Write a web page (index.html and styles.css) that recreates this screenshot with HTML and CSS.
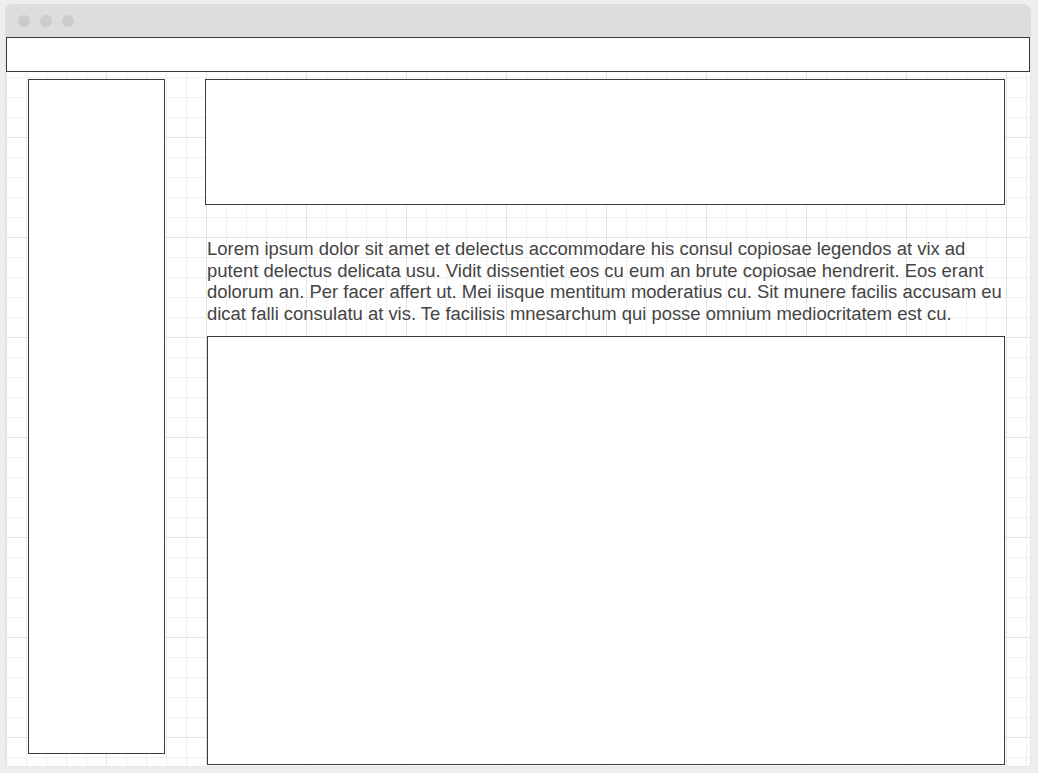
FILE: index.html
```html
<!DOCTYPE html>
<html lang="en">
<head>
<meta charset="utf-8">
<title>Wireframe</title>
<link rel="stylesheet" href="styles.css">
</head>
<body>
<div class="window">
  <div class="titlebar">
    <span class="dot"></span><span class="dot"></span><span class="dot"></span>
  </div>
  <div class="canvas">
    <div class="header box"></div>
    <div class="layout">
      <aside class="sidebar box"></aside>
      <main class="main">
        <div class="hero box"></div>
        <p class="copy">Lorem ipsum dolor sit amet et delectus accommodare his consul copiosae legendos at vix ad putent delectus delicata usu. Vidit dissentiet eos cu eum an brute copiosae hendrerit. Eos erant dolorum an. Per facer affert ut. Mei iisque mentitum moderatius cu. Sit munere facilis accusam eu dicat falli consulatu at vis. Te facilisis mnesarchum qui posse omnium mediocritatem est cu.</p>
        <div class="content box"></div>
      </main>
    </div>
  </div>
</div>
</body>
</html>
```

FILE: styles.css
```css
html, body {
  margin: 0;
  padding: 0;
}
body {
  background: #eeeeee;
  width: 1038px;
  height: 773px;
  overflow: hidden;
  font-family: "Liberation Sans", Arial, sans-serif;
}
.window {
  margin: 4px 0 0 5px;
  width: 1026px;
  background: #e6e6e6;
  border-radius: 8px 8px 0 0;
  padding: 0 1px 1px 1px;
  box-sizing: border-box;
}
.titlebar {
  height: 33px;
  margin: 0 -1px;
  background: #dddddd;
  border-radius: 8px 8px 0 0;
  display: flex;
  align-items: center;
  gap: 10px;
  padding-left: 13px;
}
.dot {
  width: 12px;
  height: 12px;
  border-radius: 50%;
  background: #cccccc;
}
.canvas {
  height: 729px;
  background-color: #ffffff;
  background-image:
    linear-gradient(to right, #e4e4e4 1px, transparent 1px),
    linear-gradient(to bottom, #e4e4e4 1px, transparent 1px),
    linear-gradient(to right, #f0f0f0 1px, transparent 1px),
    linear-gradient(to bottom, #f0f0f0 1px, transparent 1px);
  background-size: 100px 100px, 100px 100px, 20px 20px, 20px 20px;
  display: flex;
  flex-direction: column;
}
.box {
  background: #ffffff;
  border: 1px solid #3a3a3a;
  box-sizing: border-box;
}
.header {
  height: 35px;
}
.layout {
  display: flex;
  padding: 7px 25px 0 22px;
}
.sidebar {
  width: 137px;
  height: 675px;
  flex: none;
}
.main {
  margin-left: 40px;
  width: 800px;
  display: flex;
  flex-direction: column;
}
.hero {
  height: 126px;
}
.copy {
  margin: 33px 0 11px 2px;
  font-size: 18.45px;
  line-height: 21.7px;
  color: #444444;
}
.content {
  margin-left: 2px;
  height: 429px;
}
```
